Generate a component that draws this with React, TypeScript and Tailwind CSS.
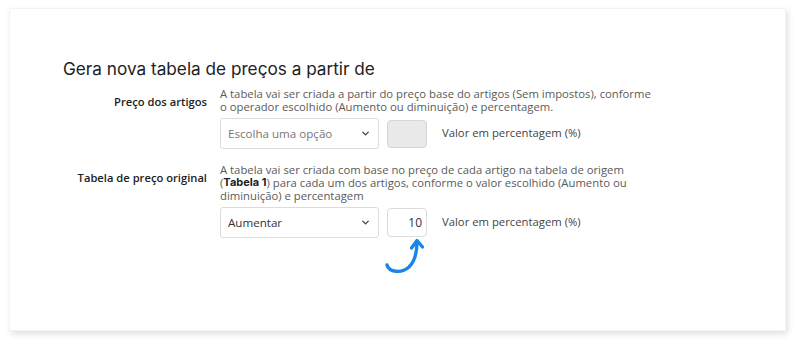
import { ChevronDown } from "lucide-react"

const sans = "font-['Open_Sans','Liberation_Sans',sans-serif]"
const display = "font-['Inter','Liberation_Sans',sans-serif]"

function FakeSelect({ value, placeholder }: { value?: string; placeholder?: string }) {
  return (
    <div className="flex h-[31px] w-[159px] items-center justify-between rounded-[3px] border border-[#dcdcdc] bg-white pl-[7px] pr-[7px]">
      <span className={`text-[11.6px] ${value ? "text-[#333]" : "text-[#777]"}`}>{value ?? placeholder}</span>
      <ChevronDown className="h-[11px] w-[11px] text-[#444]" strokeWidth={3} />
    </div>
  )
}

function CurvedArrow() {
  return (
    <svg
      className="pointer-events-none absolute left-[-7px] top-[25px]"
      width="50"
      height="45"
      viewBox="0 0 50 45"
      fill="none"
    >
      <path
        d="M7 32 C9 39 21 41 29 34 C35 28 37 20 37 9"
        stroke="#1b84e7"
        strokeWidth="3.4"
        strokeLinecap="round"
      />
      <path d="M31.5 15 L37 7.5 L42.5 14" stroke="#1b84e7" strokeWidth="3.4" strokeLinecap="round" strokeLinejoin="round" />
    </svg>
  )
}

type RowProps = {
  label: string
  description: React.ReactNode
  select: React.ReactNode
  input: React.ReactNode
}

function Row({ label, description, select, input }: RowProps) {
  return (
    <div className="flex">
      <div className="w-[144px] shrink-0 pt-[8px] text-right text-[11.2px] font-semibold leading-[13px] text-[#222]">
        {label}
      </div>
      <div className="ml-[13px]">
        <p className="w-[432px] text-[11.3px] leading-[13px] text-[#5a5a5a]">{description}</p>
        <div className="mt-[5px] flex items-center">
          {select}
          <div className="relative ml-[8px]">{input}</div>
          <span className="ml-[15px] text-[11.3px] text-[#444]">Valor em percentagem (%)</span>
        </div>
      </div>
    </div>
  )
}

export default function App() {
  return (
    <div className={`min-h-[346px] bg-white pl-[9px] pt-[8px] ${sans}`}>
      <div className="h-[323px] w-[777px] border border-[#f3f3f3] bg-white pl-[53px] pt-[48px] shadow-[2px_3px_6px_rgba(60,70,90,0.16)]">
        <h1 className={`text-[17.2px] leading-[24px] text-[#222] ${display}`}>Gera nova tabela de preços a partir de</h1>

        <div className="mt-[6px]">
          <Row
            label="Preço dos artigos"
            description="A tabela vai ser criada a partir do preço base do artigos (Sem impostos), conforme o operador escolhido (Aumento ou diminuição) e percentagem."
            select={<FakeSelect placeholder="Escolha uma opção" />}
            input={<div className="h-[28px] w-[40px] rounded-[4px] border border-[#d6d6d6] bg-[#e9e9e9]" />}
          />
        </div>

        <div className="mt-[14px]">
          <Row
            label="Tabela de preço original"
            description={
              <>
                A tabela vai ser criada com base no preço de cada artigo na tabela de origem{" "}
                <span className="inline-block h-[13px] whitespace-nowrap align-top leading-[13px]">
                  (<b className={`inline-block h-[13px] align-top text-[11px] leading-[13px] font-bold text-[#222] ${display}`}>Tabela 1</b>)
                </span>{" "}
                para cada um dos artigos, conforme o valor escolhido (Aumento ou diminuição) e percentagem
              </>
            }
            select={<FakeSelect value="Aumentar" />}
            input={
              <>
                <div className="flex h-[29px] w-[40px] items-center justify-end rounded-[4px] border border-[#dcdcdc] bg-white pr-[4px] text-[12px] text-[#333]">
                  10
                </div>
                <CurvedArrow />
              </>
            }
          />
        </div>
      </div>
    </div>
  )
}
